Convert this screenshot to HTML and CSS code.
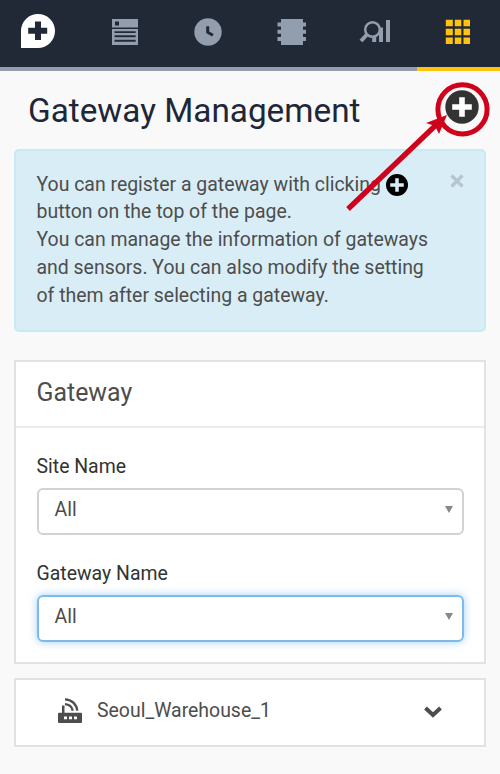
FILE: index.html
```html
<!DOCTYPE html>
<html lang="en">
<head>
<meta charset="utf-8">
<title>Gateway Management</title>
<link rel="stylesheet" href="styles.css">
</head>
<body>
<nav class="nav">
  <a class="tab"><svg class="brand" width="34" height="34" viewBox="0 0 34 34"><path fill="#fff" d="M0 34V17A17 17 0 1 1 17 34Z"/><path fill="#222936" d="M14 7.500h6v6.200h6.200v6H20V26h-6v-6.300H7.200v-6H14z"/></svg></a>
  <a class="tab"><svg width="26" height="26" viewBox="0 0 26 26"><path fill="#929eae" fill-rule="evenodd" d="M0 0h26v8.500H0zM3 2.500h4v4H3zM0 10h26v16H0zM2.500 12.200v1.900h21.200v-1.900zM2.500 16.300v1.900h21.200v-1.900zM2.500 20.800v1.900h21.200v-1.900z"/></svg></a>
  <a class="tab"><svg width="28" height="28" viewBox="0 0 28 28"><circle cx="14" cy="14" r="13.700" fill="#929eae"/><path d="M13.700 8.200v6l5.200 3" fill="none" stroke="#222936" stroke-width="3"/></svg></a>
  <a class="tab"><svg width="30" height="26" viewBox="0 0 30 26"><path fill="#929eae" d="M4 0h22v3.500h3v4h-3v3.200h3v4h-3v3.200h3v4h-3V26H4v-4.100H.5v-4H4v-3.200H.5v-4H4V7.500H.5v-4H4z"/></svg></a>
  <a class="tab"><svg width="32" height="26" viewBox="0 0 32 26"><g fill="none" stroke="#929eae"><circle cx="13.500" cy="10.500" r="7.300" stroke-width="2.500"/><path d="M8 15.500 2 22" stroke-width="4"/><path d="M29 1v22M22 8.500v14.500M15.200 17v6" stroke-width="4"/></g></svg></a>
  <a class="tab active"><svg width="26" height="26" viewBox="0 0 26 26"><path fill="#ffc20e" d="M.8.800h7v6.500h-7zM9.800.800h6.500v6.500H9.800zM18.500.800h6.500v6.500h-6.500zM.8 9.800h7v6.500h-7zM9.800 9.800h6.500v6.500H9.800zM18.500 9.800h6.500v6.500h-6.500zM.8 18.500h7v6.500h-7zM9.800 18.500h6.500v6.500H9.800zM18.500 18.500h6.500v6.500h-6.500z"/></svg></a>
</nav>
<main>
  <header class="page-head">
    <h1>Gateway Management</h1>
    <svg class="add" width="34" height="34" viewBox="0 0 34 34"><circle cx="17" cy="17" r="16.700" fill="#333"/><path d="M17 10v14M10 17h14" stroke="#fff" stroke-width="5.600" stroke-linecap="square"/></svg>
  </header>
  <section class="alert">
    <p>You can register a gateway with clicking <svg class="inline-add" width="22" height="22" viewBox="0 0 22 22"><circle cx="11" cy="11" r="11" fill="#000"/><path d="M11 6v10M6 11h10" stroke="#d9edf7" stroke-width="3.500" stroke-linecap="square"/></svg><br>button on the top of the page.<br>You can manage the information of gateways<br>and sensors. You can also modify the setting<br>of them after selecting a gateway.</p>
    <svg class="close" width="14" height="14" viewBox="0 0 14 14"><path d="m1.500 1.500 11 11m0-11-11 11" stroke="#b6c6ce" stroke-width="3.200"/></svg>
  </section>
  <section class="card filters">
    <h2>Gateway</h2>
    <div class="fields">
      <label>Site Name</label>
      <div class="select"><span>All</span><i></i></div>
      <label>Gateway Name</label>
      <div class="select focused"><span>All</span><i></i></div>
    </div>
  </section>
  <section class="card device">
    <svg width="24" height="26" viewBox="0 0 24 26"><path fill="#4d4d4d" fill-rule="evenodd" d="M4 7.500h2.500v7.300H23q1 0 1 1V24q0 1-1 1H1q-1 0-1-1v-8.200q0-1 1-1h3zM6 18.500v2.800h3v-2.800zM11 18.500v2.800h3v-2.800zM16 18.500v2.800h3v-2.800z"/><path d="M7 1.300A12.500 12.500 0 0 1 19.300 12.700M7 6.100A8.500 8.500 0 0 1 14.800 12.700" fill="none" stroke="#4d4d4d" stroke-width="2.300"/></svg>
    <span>Seoul_Warehouse_1</span>
    <svg class="chevron" width="18" height="12" viewBox="0 0 18 12"><path d="m1.500 2 7.500 7 7.500-7" fill="none" stroke="#4d4d4d" stroke-width="4"/></svg>
  </section>
</main>
<svg class="callout" width="152" height="140" viewBox="340 76 152 140"><circle cx="462.500" cy="109.300" r="24.600" fill="none" stroke="#d0021b" stroke-width="5"/><path d="M348 209 436 125" stroke="#d0021b" stroke-width="5.200"/><path fill="#d0021b" d="m447 115-8 19-4-8-9-3z"/></svg>
</body>
</html>
```
FILE: styles.css
```css
* { box-sizing: border-box; }
body {
  position: relative;
  margin: 0;
  height: 774px;
  overflow: hidden;
  background: #f9f9f9;
  color: #4d4d4d;
  font-family: Roboto, sans-serif;
  font-size: 19.45px;
}
svg { display: block; flex: none; }
.nav { display: flex; height: 71px; background: #222936; }
.tab {
  flex: 1;
  display: flex;
  justify-content: center;
  align-items: center;
  padding-bottom: 3px;
  border-bottom: 4px solid #929eae;
}
.tab.active { border-color: #ffc20e; }
.brand { margin: -2px 8px 0 0; }
main { padding: 0 14px; }
.page-head {
  display: flex;
  justify-content: space-between;
  height: 78px;
  padding: 19px 7px 0 14px;
}
h1 {
  margin: 0;
  color: #1e2737;
  font-size: 33.3px;
  font-weight: 400;
  line-height: 41px;
  white-space: nowrap;
}
.alert {
  display: flex;
  justify-content: space-between;
  height: 183px;
  padding: 20.5px 21px 0 21.5px;
  border: 2px solid #c6ebf3;
  border-radius: 5px;
  background: #d9edf7;
}
.alert p { margin: -1px 0 0 -1px; line-height: 27.8px; white-space: nowrap; }
.inline-add { display: inline-block; vertical-align: -5px; }
.close { margin: 2px -1px 0 0; }
.card {
  border: 2px solid #e2e2e2;
  background: #fff;
}
.filters { height: 304px; margin-top: 28px; }
h2 {
  margin: 0;
  height: 66px;
  padding: 0 20.5px;
  border-bottom: 2px solid #ebebeb;
  font-size: 24.9px;
  font-weight: 400;
  line-height: 61px;
}
.fields { padding: 23px 20.5px 0; }
label { display: block; height: 37px; color: #333; line-height: 31px; }
.select {
  display: flex;
  justify-content: space-between;
  height: 47px;
  margin-bottom: 23px;
  padding: 0 8.5px 0 16px;
  border: 2px solid #d2d2d2;
  border-radius: 6px;
  line-height: 40px;
}
.select i {
  margin-top: 16px;
  width: 0;
  height: 0;
  border: 4.5px solid transparent;
  border-top: 7px solid #888;
  border-bottom: 0;
}
.select.focused {
  border-color: #7dbaec;
  box-shadow: 0 0 9px #66afe999;
}
.device {
  display: flex;
  align-items: center;
  height: 69px;
  margin-top: 14px;
  padding: 0 42px 4px 42px;
}
.device span { margin-left: 15px; }
.chevron { margin-left: auto; margin-top: 3px; }
.callout { position: absolute; left: 340px; top: 76px; }
```
